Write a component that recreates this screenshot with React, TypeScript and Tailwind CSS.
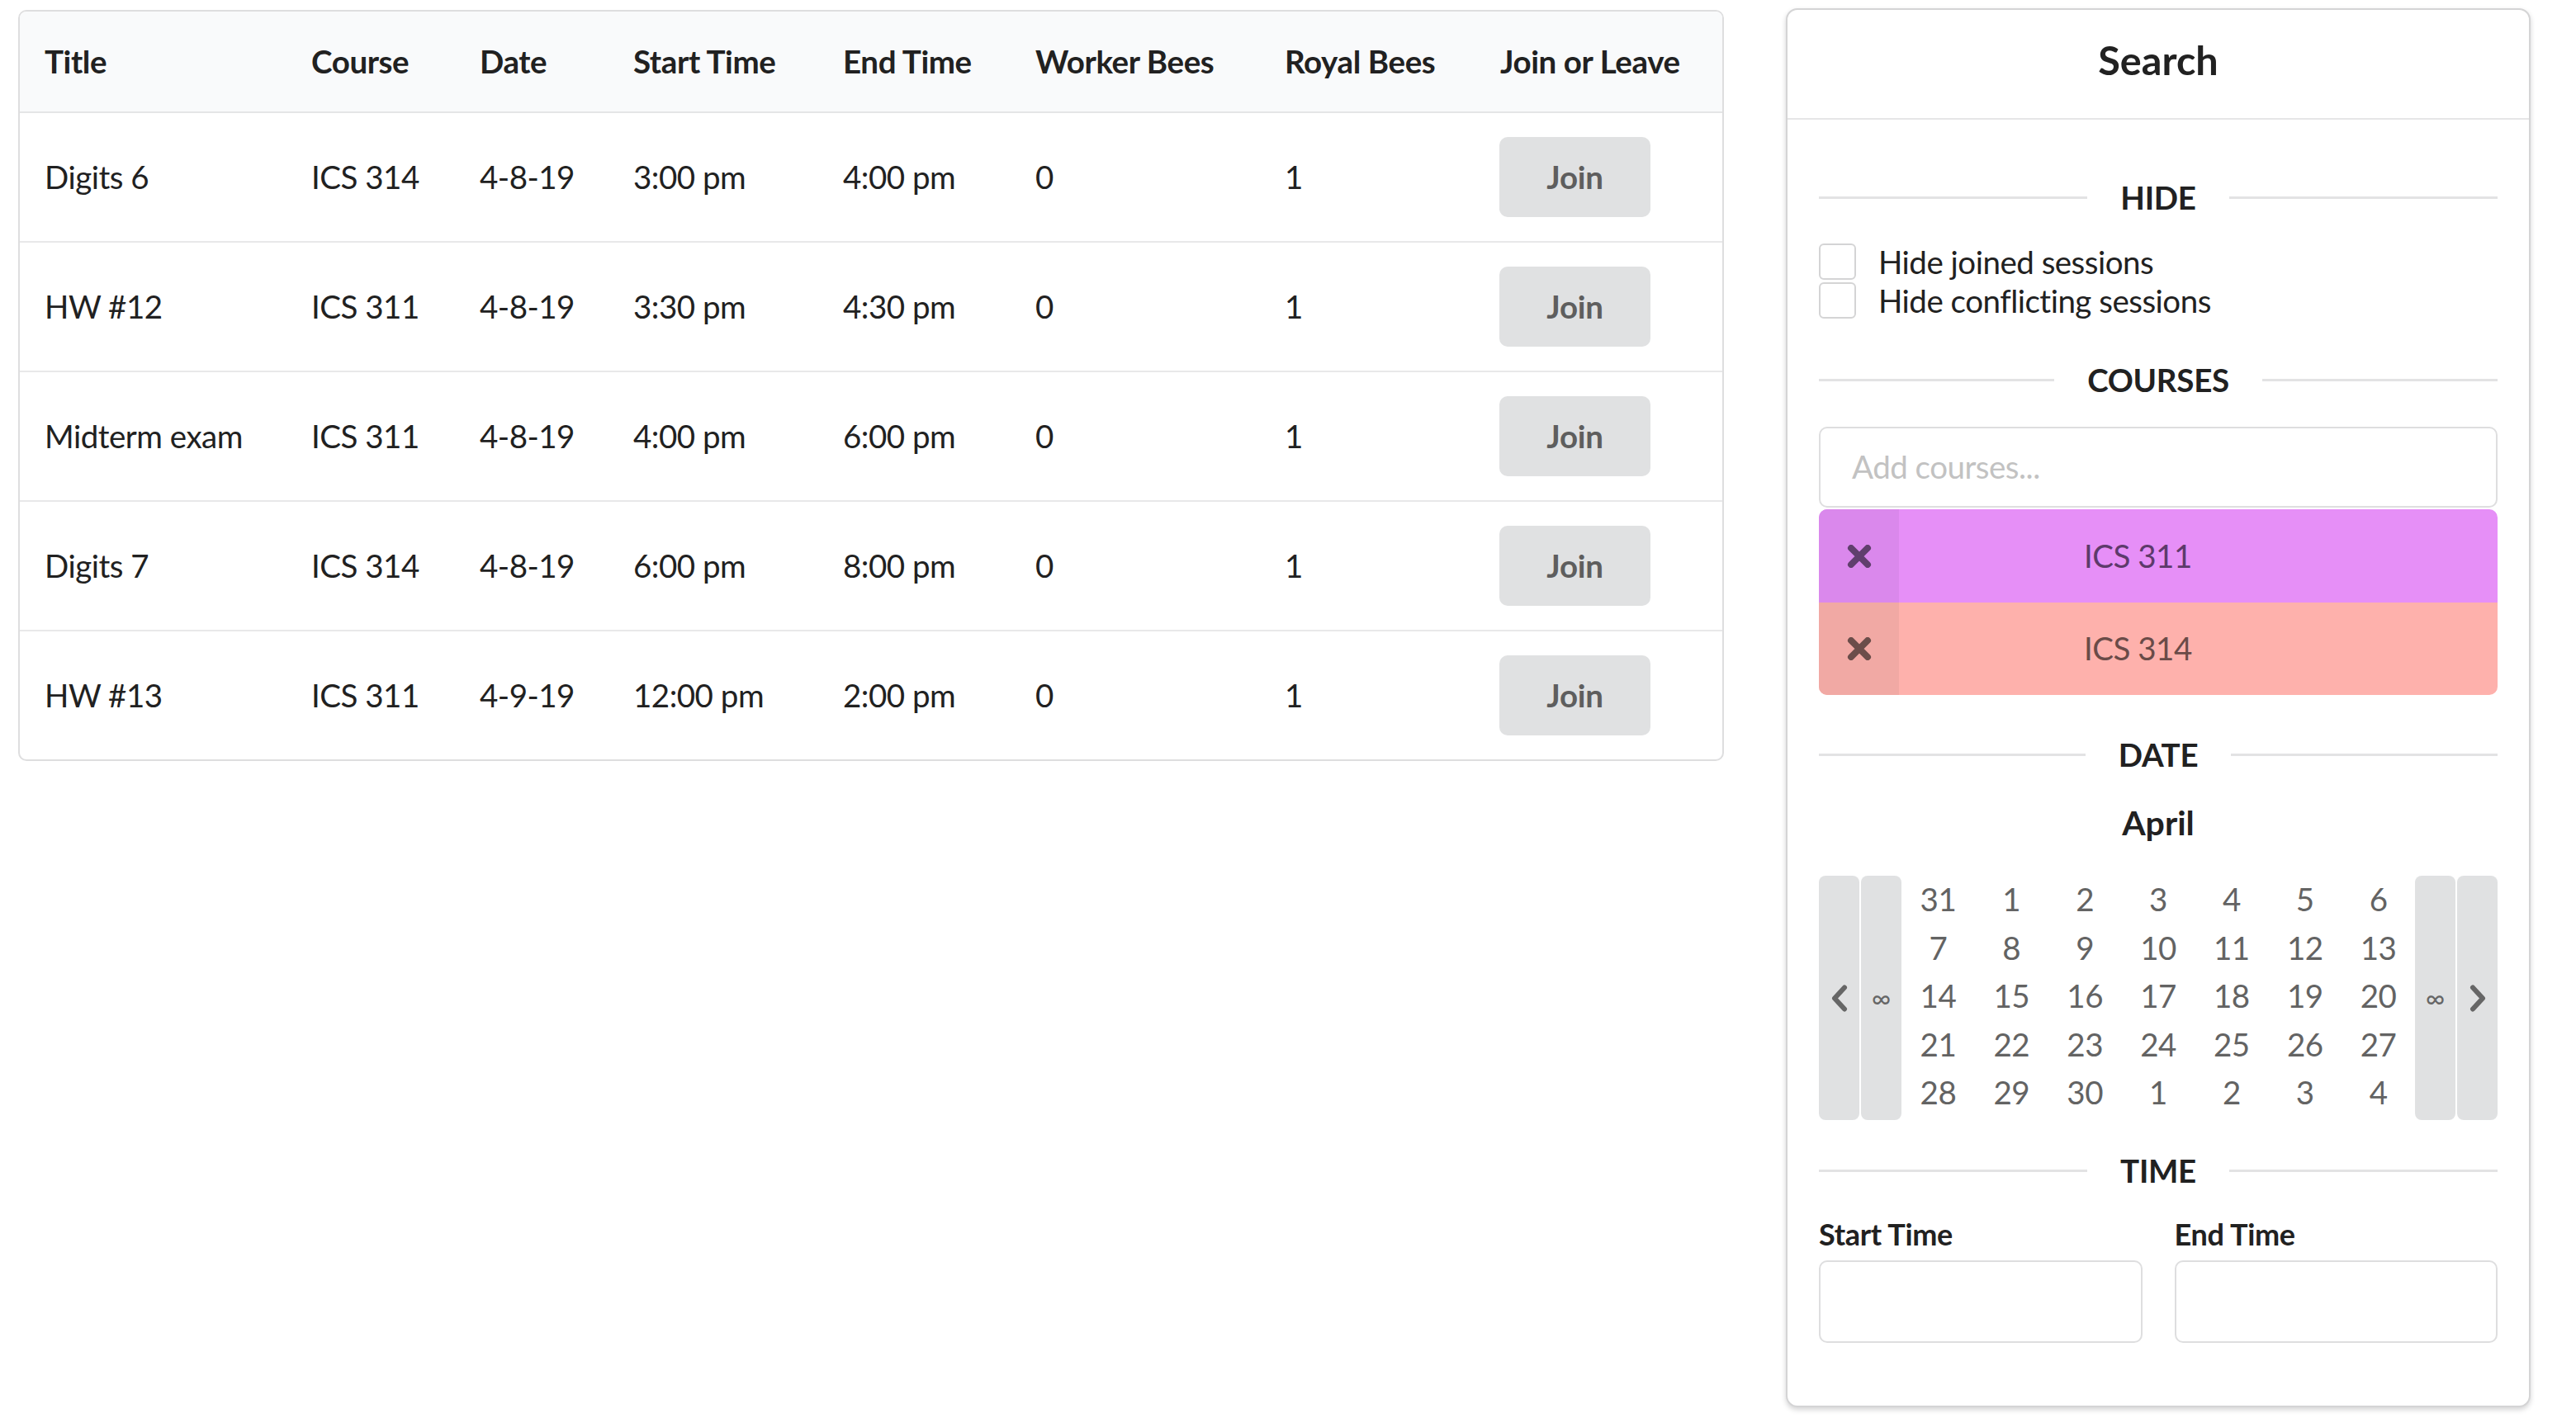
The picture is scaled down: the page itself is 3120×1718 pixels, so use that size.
import React from "react";

const rows: string[][] = [
  ["Digits 6", "ICS 314", "4-8-19", "3:00 pm", "4:00 pm", "0", "1"],
  ["HW #12", "ICS 311", "4-8-19", "3:30 pm", "4:30 pm", "0", "1"],
  ["Midterm exam", "ICS 311", "4-8-19", "4:00 pm", "6:00 pm", "0", "1"],
  ["Digits 7", "ICS 314", "4-8-19", "6:00 pm", "8:00 pm", "0", "1"],
  ["HW #13", "ICS 311", "4-9-19", "12:00 pm", "2:00 pm", "0", "1"],
];

const headers = [
  "Title",
  "Course",
  "Date",
  "Start Time",
  "End Time",
  "Worker Bees",
  "Royal Bees",
  "Join or Leave",
];

const calendar: string[] = [
  "31", "1", "2", "3", "4", "5", "6",
  "7", "8", "9", "10", "11", "12", "13",
  "14", "15", "16", "17", "18", "19", "20",
  "21", "22", "23", "24", "25", "26", "27",
  "28", "29", "30", "1", "2", "3", "4",
];

const gridCols =
  "grid grid-cols-[323px_204px_186px_254px_233px_302px_261px_299px]";

function Divider({ label }: { label: string }) {
  return (
    <div className="flex h-[56px] items-center gap-[40px]">
      <div className="h-[3px] flex-1 bg-[#e3e3e4]" />
      <span className="text-[38.5px] font-bold leading-none tracking-[-0.3px] text-[#212121]">
        {label}
      </span>
      <div className="h-[3px] flex-1 bg-[#e3e3e4]" />
    </div>
  );
}

function XIcon({ color }: { color: string }) {
  return (
    <svg width="30" height="28" viewBox="0 0 30 28">
      <path
        d="M5 4 L25 24 M25 4 L5 24"
        stroke={color}
        strokeWidth="8"
        strokeLinecap="round"
        fill="none"
      />
    </svg>
  );
}

function Chevron({ dir }: { dir: "left" | "right" }) {
  return (
    <svg width="22" height="33" viewBox="0 0 22 33">
      <path
        d={dir === "left" ? "M17 3.5 L5 16.5 L17 29.5" : "M5 3.5 L17 16.5 L5 29.5"}
        stroke="#666666"
        strokeWidth="6"
        strokeLinecap="round"
        strokeLinejoin="round"
        fill="none"
      />
    </svg>
  );
}

function CheckRow({ label }: { label: string }) {
  return (
    <div className="flex h-[47px] items-start">
      <div className="h-[44px] w-[45px] rounded-[6px] border-2 border-[#d4d4d5] bg-white" />
      <span className="ml-[27px] text-[38.5px] leading-[44px] tracking-[-0.5px] text-[#212121]">
        {label}
      </span>
    </div>
  );
}

export default function App() {
  return (
    <div className="flex min-h-screen items-start bg-white pl-[22px] pt-[10px] font-['Lato',sans-serif] text-[#212121]">
      {/* Sessions table */}
      <div className="mt-[2px] w-[2066px] overflow-hidden rounded-[10px] border-2 border-[#dededf] bg-white">
        <div
          className={`${gridCols} h-[123px] items-center border-b-2 border-[#e4e5e6] bg-[#f9fafb]`}
        >
          {headers.map((h) => (
            <div
              key={h}
              className="pl-[30px] text-[38.5px] font-bold leading-none tracking-[-0.4px]"
            >
              {h}
            </div>
          ))}
        </div>
        {rows.map((r, i) => (
          <div
            key={i}
            className={`${gridCols} items-center ${
              i < rows.length - 1
                ? "h-[157px] border-b-2 border-[#e8e8e9]"
                : "h-[155px]"
            }`}
          >
            {r.map((c, j) => (
              <div
                key={j}
                className="pl-[30px] text-[38.5px] leading-none tracking-[-0.5px]"
              >
                {c}
              </div>
            ))}
            <div className="pl-[29px]">
              <button className="flex h-[97px] w-[183px] items-center justify-center rounded-[10px] bg-[#e0e1e2] text-[38.5px] font-bold tracking-[-0.3px] text-[#5e5e5e]">
                Join
              </button>
            </div>
          </div>
        ))}
      </div>

      {/* Search card */}
      <div className="ml-[75px] w-[902px] rounded-[14px] border-2 border-[#d4d4d5] bg-white shadow-[0_3px_6px_0_#d4d4d5]">
        <div className="flex h-[133px] items-center justify-center border-b-2 border-[#e6e6e7] pb-[10px] text-[48.6px] font-bold text-[#212121]">
          Search
        </div>
        <div className="flex flex-col px-[38px] pb-[76px]">
          <div className="mt-[66px]">
            <Divider label="HIDE" />
          </div>
          <div className="mt-[28px]">
            <CheckRow label="Hide joined sessions" />
            <CheckRow label="Hide conflicting sessions" />
          </div>
          <div className="mt-[43px]">
            <Divider label="COURSES" />
          </div>
          <div className="mt-[29px] flex h-[98px] items-center rounded-[10px] border-[2.5px] border-[#dededf] pl-[38px] text-[38.5px] tracking-[-0.5px] text-[#c2c2c2]">
            Add courses...
          </div>
          <div className="mt-[2px] flex h-[113px] overflow-hidden rounded-t-[10px] bg-[#e68ff7]">
            <div className="flex w-[97px] items-center justify-center bg-[#da88ec]">
              <XIcon color="#603f6d" />
            </div>
            <div className="flex flex-1 items-center pl-[224px] text-[38.5px] tracking-[-0.5px] text-[#5d3a6b]">
              ICS 311
            </div>
          </div>
          <div className="flex h-[112px] overflow-hidden rounded-b-[10px] bg-[#feb1ac]">
            <div className="flex w-[97px] items-center justify-center bg-[#f1a9a4]">
              <XIcon color="#6b4d4a" />
            </div>
            <div className="flex flex-1 items-center pl-[224px] text-[38.5px] tracking-[-0.5px] text-[#6a4b48]">
              ICS 314
            </div>
          </div>
          <div className="mt-[44px]">
            <Divider label="DATE" />
          </div>
          <div className="mt-[27px] flex h-[56px] items-center justify-center text-[41px] font-bold text-[#212121]">
            April
          </div>
          <div className="mt-[36px] flex h-[296px]">
            <div className="flex w-[49px] items-center justify-center rounded-[8px] bg-[#e0e1e2]">
              <Chevron dir="left" />
            </div>
            <div className="ml-[2px] flex w-[49px] items-center justify-center rounded-[8px] bg-[#e0e1e2] text-[32px] text-[#666666]">
              ∞
            </div>
            <div className="grid flex-1 grid-cols-7 grid-rows-5 pb-[4px]">
              {calendar.map((d, i) => (
                <div
                  key={i}
                  className="flex items-center justify-center text-[38.5px] tracking-[-0.5px] text-[#636363]"
                >
                  {d}
                </div>
              ))}
            </div>
            <div className="flex w-[49px] items-center justify-center rounded-[8px] bg-[#e0e1e2] text-[32px] text-[#666666]">
              ∞
            </div>
            <div className="ml-[2px] flex w-[49px] items-center justify-center rounded-[8px] bg-[#e0e1e2]">
              <Chevron dir="right" />
            </div>
          </div>
          <div className="mt-[33px]">
            <Divider label="TIME" />
          </div>
          <div className="mt-[28px] grid grid-cols-2 gap-x-[39px]">
            <div className="flex flex-col">
              <div className="flex h-[42px] items-center text-[36px] font-bold tracking-[-0.3px] text-[#212121]">
                Start Time
              </div>
              <div className="mt-[11px] h-[100px] rounded-[10px] border-[2.5px] border-[#dededf]" />
            </div>
            <div className="flex flex-col">
              <div className="flex h-[42px] items-center text-[36px] font-bold tracking-[-0.3px] text-[#212121]">
                End Time
              </div>
              <div className="mt-[11px] h-[100px] rounded-[10px] border-[2.5px] border-[#dededf]" />
            </div>
          </div>
        </div>
      </div>
    </div>
  );
}
